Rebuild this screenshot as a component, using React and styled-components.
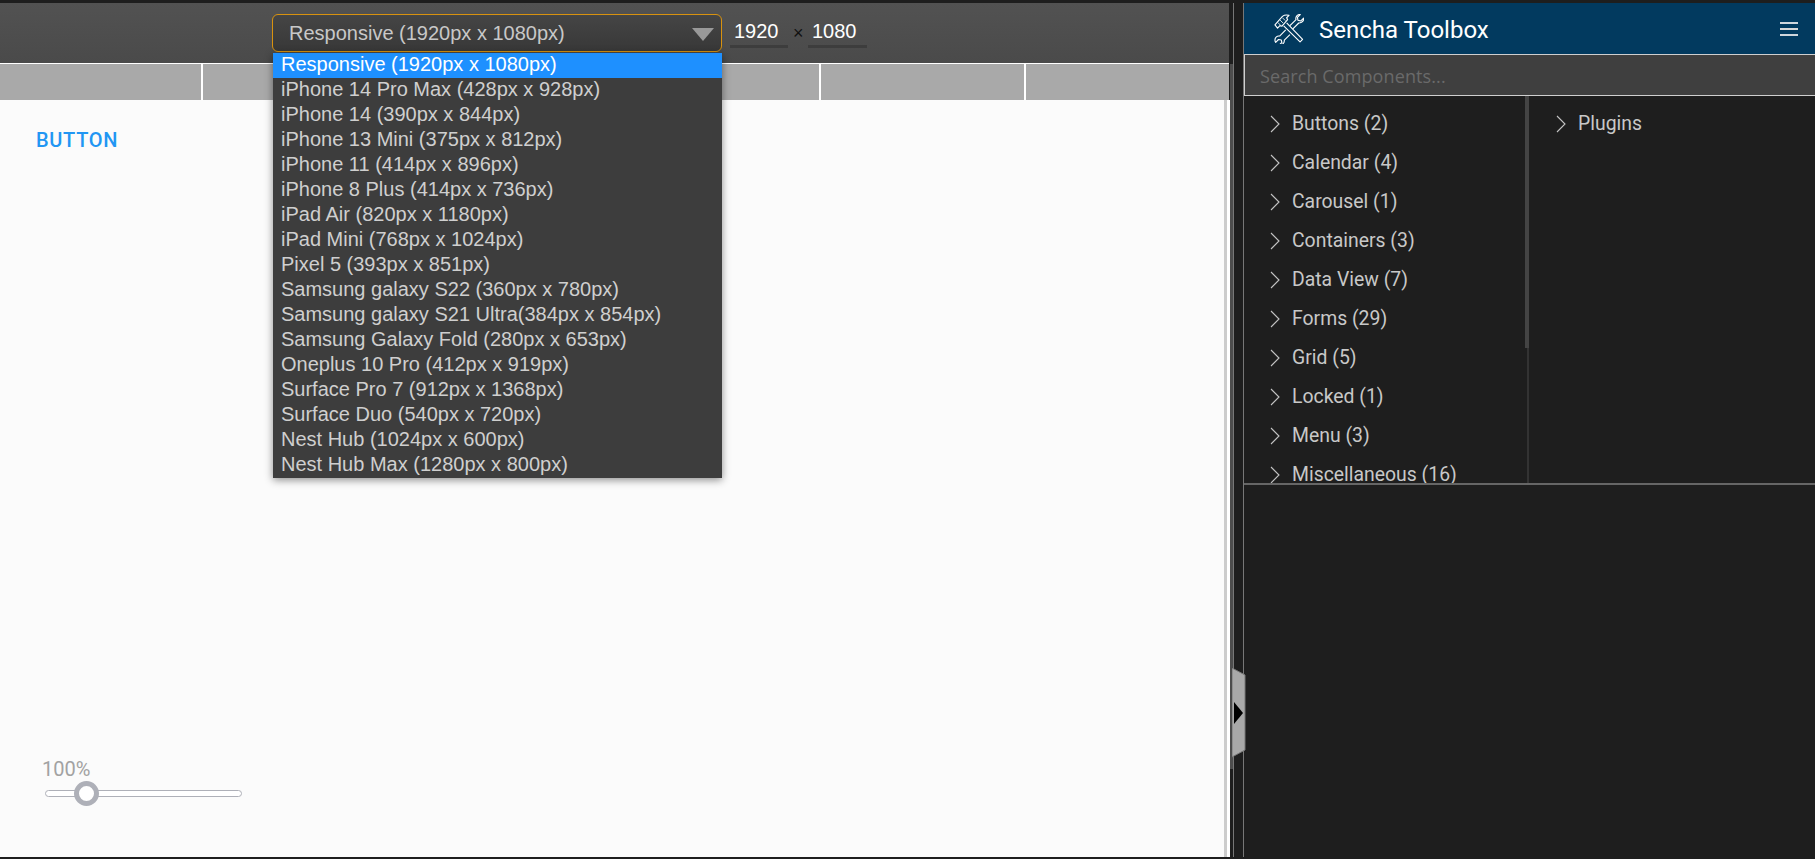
import React from 'react'
import styled, { createGlobalStyle } from 'styled-components'

const GlobalStyle = createGlobalStyle`
  html, body { margin: 0; padding: 0; height: 100%; overflow: hidden; background: #1e1e1e; }
  * { box-sizing: border-box; }
`

const Page = styled.div`
  display: flex;
  width: 1815px;
  height: 859px;
  padding: 3px 0 2px;
  background: #1e1e1e;
  position: relative;
`

const Preview = styled.div`
  width: 1230px;
  display: flex;
  flex-direction: column;
`

const Toolbar = styled.div`
  height: 60px;
  flex-shrink: 0;
  padding: 11px 0 0 272px;
  display: flex;
  align-items: flex-start;
  background: linear-gradient(#525252, #4a4a4a);
  border-right: 1px solid #1e1e1e;
  position: relative;
`

const SelectBox = styled.div`
  width: 450px;
  height: 38px;
  border: 1px solid #d8920f;
  border-radius: 6px;
  background: linear-gradient(#454545, #383838);
  color: #c8c8c8;
  font: 20px "Liberation Sans", Arial, sans-serif;
  display: flex;
  align-items: center;
  justify-content: space-between;
  padding: 0 7px 0 16px;
`

const Caret = styled.span`
  width: 0;
  height: 0;
  border-left: 11px solid transparent;
  border-right: 11px solid transparent;
  border-top: 13px solid #999;
  margin-top: 2px;
`

const SizeField = styled.div`
  width: ${p => p.$width}px;
  height: 34px;
  margin-left: ${p => p.$left}px;
  border-bottom: 3px solid #3d3d3d;
  color: #fff;
  font: 20px/34px "Liberation Sans", Arial, sans-serif;
  padding-left: 4px;
`

const Times = styled.span`
  margin-left: 5px;
  width: 15px;
  color: #111;
  font: 18px/38px "Liberation Sans", Arial, sans-serif;
`

const Menu = styled.ul`
  position: absolute;
  left: 273px;
  top: 50px;
  width: 449px;
  margin: 0;
  padding: 0;
  list-style: none;
  background: #3d3d3d;
  box-shadow: 0 2px 8px rgba(0, 0, 0, 0.45);
  z-index: 3;
`

const MenuItem = styled.li`
  height: 25px;
  padding-left: 8px;
  color: ${p => (p.$active ? '#fff' : '#cfcfcf')};
  background: ${p => (p.$active ? '#1e90ff' : 'transparent')};
  font: 20px/23px "Liberation Sans", Arial, sans-serif;
  white-space: nowrap;
`

const TabStrip = styled.div`
  height: 37px;
  flex-shrink: 0;
  display: flex;
  gap: 2px;
  margin-right: 1px;
  background: #fff;
  border-top: 1px solid #fff;
`

const TabCell = styled.div`
  width: ${p => p.$width}px;
  background: #a9a9a9;
`

const Canvas = styled.div`
  flex: 1;
  display: flex;
  flex-direction: column;
  background: #fbfbfb;
  border-right: 3px solid #fff;
  box-shadow: inset -3px 0 0 #cccccc;
  padding: 28px 0 0 36px;
`

const LinkButton = styled.div`
  color: #2196f3;
  font: 500 20px/24px Roboto, sans-serif;
  letter-spacing: 0.7px;
`

const ZoomBox = styled.div`
  margin-top: auto;
  margin-bottom: 60px;
  width: 205px;
`

const ZoomLabel = styled.div`
  margin-left: 6px;
  color: #a2a2a2;
  font: 20px/20px Roboto, sans-serif;
`

const Track = styled.div`
  position: relative;
  margin: 11px 0 0 9px;
  width: 197px;
  height: 7px;
  border: 1px solid #aeb0b8;
  border-radius: 4px;
  background: #fff;
`

const Thumb = styled.div`
  position: absolute;
  left: 28px;
  top: -10px;
  width: 25px;
  height: 25px;
  border: 5px solid #aeb0b8;
  border-radius: 50%;
  background: #fff;
`

const Gutter = styled.div`
  width: 3px;
  background: linear-gradient(#1e1e1e 61px, #4d4d4d 61px, #4d4d4d 766px, #1e1e1e 766px);
`

const SplitLane = styled.div`
  width: 11px;
  border-left: 1px solid #777;
  border-right: 1px solid #777;
  background: #1e1e1e;
`

const HandleArt = styled.svg`
  position: absolute;
  left: 1232px;
  top: 668px;
  z-index: 2;
`

const Toolbox = styled.div`
  flex: 1;
  display: flex;
  flex-direction: column;
  min-width: 0;
`

const Header = styled.div`
  height: 52px;
  flex-shrink: 0;
  display: flex;
  align-items: center;
  padding: 0 17px 0 30px;
  background: #023a5f;
  border-bottom: 1px solid #cfcfcf;
`

const Title = styled.div`
  margin: 2px 0 0 15px;
  color: #fff;
  font: 400 24px Roboto, sans-serif;
  flex: 1;
`

const Burger = styled.div`
  width: 18px;
  height: 14px;
  border-top: 2px solid #cfd6dc;
  border-bottom: 2px solid #cfd6dc;
  position: relative;
  &::after {
    content: '';
    position: absolute;
    left: 0;
    right: 0;
    top: 4px;
    height: 2px;
    background: #d8d8d8;
  }
`

const Search = styled.div`
  height: 41px;
  flex-shrink: 0;
  display: flex;
  align-items: center;
  padding: 2px 0 0 15px;
  background: #3f3f3f;
  border-left: 1px solid #cfcfcf;
  border-bottom: 1px solid #cfcfcf;
  color: #6a6a6a;
  font: 18px "Open Sans", sans-serif;
  letter-spacing: 0.1px;
`

const Lists = styled.div`
  height: 389px;
  flex-shrink: 0;
  display: flex;
  overflow: hidden;
  border-bottom: 2px solid #666;
`

const TreeColumn = styled.div`
  position: relative;
  width: ${p => p.$width}px;
  padding: 8px 0 0 ${p => p.$left}px;
  border-right: ${p => (p.$divider ? '2px solid #333' : 'none')};
  flex-shrink: 0;
`

const ScrollThumb = styled.div`
  position: absolute;
  right: -2px;
  top: 0;
  width: 4px;
  height: 252px;
  background: #444;
`

const TreeRow = styled.div`
  height: 39px;
  display: flex;
  align-items: center;
  gap: 12px;
  color: #c8c8c8;
  font: 19.4px Roboto, sans-serif;
  white-space: nowrap;
`

const Chevron = () => (
  <svg width="10" height="18" viewBox="0 0 10 18" fill="none" stroke="#c4c4c4" strokeWidth="1.1">
    <path d="M1 1l8 8-8 8" />
  </svg>
)

const ToolsLogo = () => (
  <svg width="30" height="30" viewBox="0 0 32 32" fill="none" stroke="#fff" strokeWidth="1.2" strokeLinejoin="round">
    <path d="M13.5 9.5l17 17.5-2.7 2.7-17.5-17" />
    <path d="M1 11.5l8-9c2-1.5 4.5-1.8 7-1l-2.5 2.5 1 2-6 7-2.2-.6-2.5 2.6z" />
    <path d="M4 9l3 3M6.5 6.5l3 3M9 4l3 3" strokeWidth="0.9" />
    <path d="M17 12.5l6.5-6.5c-.8-2.5.8-5 3.5-5.5l1 .2-3 3 .6 3 3 .7 3-3c.4 3-2 5.5-5.2 5.2l-6.3 6.3" />
    <path d="M12.5 17l-6.5 6.5c-2.6-.5-5 1.5-5 4.2 0 .9.3 1.8.8 2.5l3-3 3 .6.6 2.6-2.6 2.5c3 .5 5.5-2 5.2-5l6-6" />
  </svg>
)

const DEVICES = [
  'Responsive (1920px x 1080px)',
  'iPhone 14 Pro Max (428px x 928px)',
  'iPhone 14 (390px x 844px)',
  'iPhone 13 Mini (375px x 812px)',
  'iPhone 11 (414px x 896px)',
  'iPhone 8 Plus (414px x 736px)',
  'iPad Air (820px x 1180px)',
  'iPad Mini (768px x 1024px)',
  'Pixel 5 (393px x 851px)',
  'Samsung galaxy S22 (360px x 780px)',
  'Samsung galaxy S21 Ultra(384px x 854px)',
  'Samsung Galaxy Fold (280px x 653px)',
  'Oneplus 10 Pro (412px x 919px)',
  'Surface Pro 7 (912px x 1368px)',
  'Surface Duo (540px x 720px)',
  'Nest Hub (1024px x 600px)',
  'Nest Hub Max (1280px x 800px)',
]

const GROUPS = [
  'Buttons (2)',
  'Calendar (4)',
  'Carousel (1)',
  'Containers (3)',
  'Data View (7)',
  'Forms (29)',
  'Grid (5)',
  'Locked (1)',
  'Menu (3)',
  'Miscellaneous (16)',
]

const TABS = [201, 205, 204, 203, 203, 203]

export default function App() {
  return (
    <Page>
      <GlobalStyle />
      <Preview>
        <Toolbar>
          <SelectBox>
            Responsive (1920px x 1080px)
            <Caret />
          </SelectBox>
          <SizeField $width={58} $left={8}>1920</SizeField>
          <Times>×</Times>
          <SizeField $width={59} $left={0}>1080</SizeField>
          <Menu>
            {DEVICES.map((d, i) => (
              <MenuItem key={d} $active={i === 0}>{d}</MenuItem>
            ))}
          </Menu>
        </Toolbar>
        <TabStrip>
          {TABS.map((w, i) => (
            <TabCell key={i} $width={w} />
          ))}
        </TabStrip>
        <Canvas>
          <LinkButton>BUTTON</LinkButton>
          <ZoomBox>
            <ZoomLabel>100%</ZoomLabel>
            <Track>
              <Thumb />
            </Track>
          </ZoomBox>
        </Canvas>
      </Preview>
      <Gutter />
      <SplitLane />
      <HandleArt width="14" height="90" viewBox="0 0 14 90">
        <path d="M0 0l13 7v75L0 89z" fill="#a9a9a9" stroke="#777" strokeWidth="1" />
        <path d="M2 34l9 11-9 11z" fill="#000" />
      </HandleArt>
      <Toolbox>
        <Header>
          <ToolsLogo />
          <Title>Sencha Toolbox</Title>
          <Burger />
        </Header>
        <Search>Search Components...</Search>
        <Lists>
          <TreeColumn $width={285} $left={26} $divider>
            <ScrollThumb />
            {GROUPS.map(g => (
              <TreeRow key={g}>
                <Chevron />
                {g}
              </TreeRow>
            ))}
          </TreeColumn>
          <TreeColumn $width={286} $left={27}>
            <TreeRow>
              <Chevron />
              Plugins
            </TreeRow>
          </TreeColumn>
        </Lists>
      </Toolbox>
    </Page>
  )
}
